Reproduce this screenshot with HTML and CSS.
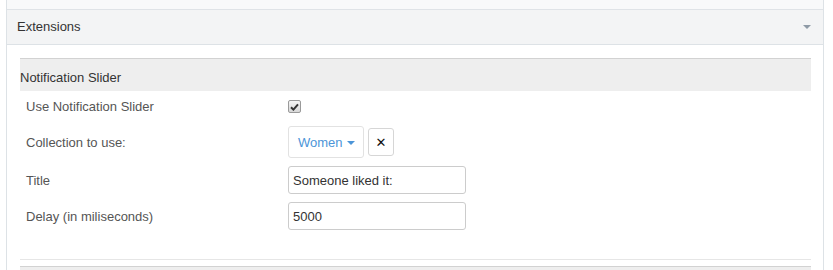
FILE: index.html
```html
<!DOCTYPE html>
<html lang="en">
<head>
  <meta charset="UTF-8">
  <title>Extensions</title>
  <link rel="stylesheet" href="styles.css">
</head>
<body>
  <div class="panel">
    <div class="panel-top"></div>
    <div class="panel-heading">
      <span>Extensions</span>
      <span class="caret"></span>
    </div>
    <div class="panel-body">
      <div class="group">
        <h4 class="group-title">Notification Slider</h4>
        <div class="rows">
          <div class="row row-check">
            <label>Use Notification Slider</label>
            <span class="check">
              <svg width="9" height="8" viewBox="0 0 9 8"><path d="M1 4.2 L3.4 6.6 L8 1.4" fill="none" stroke="#333" stroke-width="2"/></svg>
            </span>
          </div>
          <div class="row row-select">
            <label>Collection to use:</label>
            <button class="btn-select">Women <span class="caret-blue"></span></button>
            <button class="btn-clear">&#x2715;</button>
          </div>
          <div class="row">
            <label>Title</label>
            <input type="text" class="field" value="Someone liked it:">
          </div>
          <div class="row">
            <label>Delay (in miliseconds)</label>
            <input type="text" class="field" value="5000">
          </div>
        </div>
      </div>
      <div class="group-title next"></div>
    </div>
  </div>
</body>
</html>
```

FILE: styles.css
```css
body {
  margin: 0;
  background: #ffffff;
  font-family: "Liberation Sans", Arial, sans-serif;
  font-size: 13px;
  color: #333;
  overflow: hidden;
}
.panel {
  margin-left: 6px;
  width: 816px;
  border-left: 1px solid #dde2e6;
  border-right: 1px solid #dde2e6;
  height: 270px;
  overflow: hidden;
}
.panel-top {
  height: 9px;
  background: #f8f9fa;
  border-bottom: 1px solid #dfe3e7;
}
.panel-heading {
  display: flex;
  justify-content: space-between;
  align-items: center;
  height: 34px;
  line-height: 34px;
  padding: 0 12px 0 10px;
  background: #f3f4f5;
  border-bottom: 1px solid #dde2e6;
}
.caret {
  width: 0;
  height: 0;
  border-top: 4px solid #8e9aa6;
  border-left: 4px solid transparent;
  border-right: 4px solid transparent;
}
.panel-body {
  padding: 13px 12px 0 13px;
}
.group {
  border-bottom: 1px solid #e6e6e6;
  padding-bottom: 29px;
  margin-bottom: 6px;
}
.group-title {
  margin: 0;
  font-size: 13px;
  font-weight: normal;
  line-height: 18px;
  padding: 10px 0 4px;
  background: #eeeeee;
  border-top: 1px solid #d2d2d2;
}
.group-title.next {
  height: 20px;
  padding: 0;
}
.rows {
  padding: 4px 0 0 6px;
}
.row {
  display: flex;
  align-items: center;
  height: 28px;
  margin-bottom: 8px;
}
.row:last-child {
  margin-bottom: 0;
}
.row label {
  width: 262px;
  color: #555;
}
.row-check {
  height: 23px;
}
.row-select {
  height: 32px;
}
.check {
  display: flex;
  align-items: center;
  justify-content: center;
  width: 11px;
  height: 11px;
  border: 1px solid #9a9a9a;
  border-radius: 2px;
  background: linear-gradient(#f4f4f4, #d8d8d8);
}
.btn-select {
  height: 32px;
  width: 76px;
  padding: 0 0 0 9px;
  text-align: left;
  font: inherit;
  color: #4c95d8;
  background: #fff;
  border: 1px solid #e2e2e2;
  border-radius: 3px;
}
.caret-blue {
  display: inline-block;
  vertical-align: middle;
  margin-left: 1px;
  border-top: 4px solid #4c95d8;
  border-left: 4px solid transparent;
  border-right: 4px solid transparent;
}
.btn-clear {
  margin-left: 4px;
  width: 26px;
  height: 28px;
  padding: 0;
  font: bold 13px "DejaVu Sans", sans-serif;
  color: #111;
  background: #fff;
  border: 1px solid #d6d6d6;
  border-radius: 3px;
}
.field {
  box-sizing: border-box;
  width: 178px;
  height: 28px;
  padding: 0 4px;
  font: inherit;
  color: #333;
  border: 1px solid #cccccc;
  border-radius: 3px;
}
```
